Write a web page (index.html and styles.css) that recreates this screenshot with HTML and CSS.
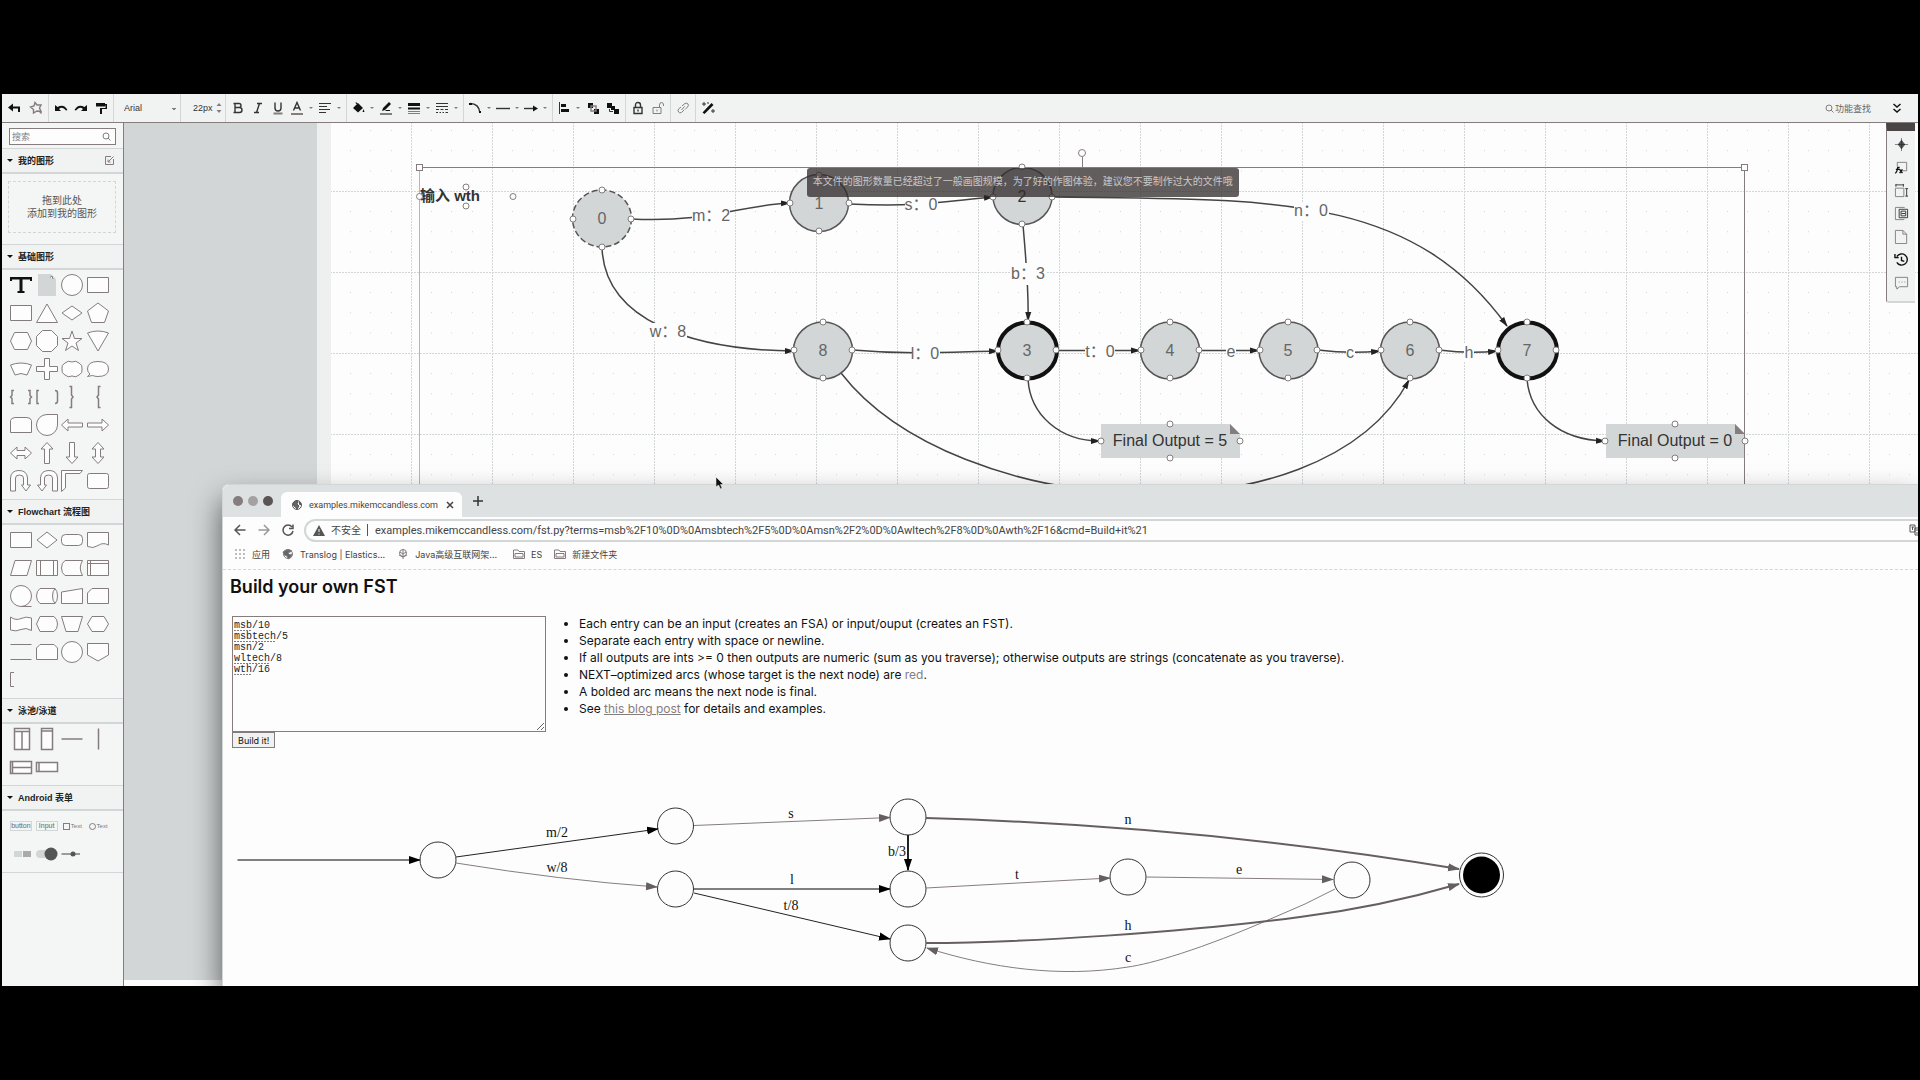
FILE: index.html
```html
<!DOCTYPE html>
<html lang="zh-CN">
<head>
<meta charset="utf-8">
<title>Build your own FST</title>
<link rel="stylesheet" href="styles.css">
</head>
<body>
<div class="app">
  <header class="toolbar">
    <div class="group group-nav">
      <button class="tool" aria-label="返回"><svg class="ic" viewBox="0 0 14 14"><path class="f" d="M1 6.500L6 2.500V5.500H13V11H11V7.500H6V10.500Z"/></svg></button>
      <button class="tool" aria-label="收藏"><svg class="ic" viewBox="0 0 14 14"><path class="g w" d="M6 1.500L8 4L12 4L10.500 7L12 10.500L8 10L4.500 12L4.500 8.500L1.500 6L5 5ZM10 10L12.500 12.500"/></svg></button>
    </div>
    <div class="group">
      <button class="tool" aria-label="撤销"><svg class="ic" viewBox="0 0 14 14"><path class="f" d="M1 4V10H7L5 8Q8.500 5 12 9.500L13.500 9Q10 2.500 3.500 6Z"/></svg></button>
      <button class="tool" aria-label="重做"><svg class="ic" viewBox="0 0 14 14"><path class="f" d="M13 4V10H7L9 8Q5.500 5 2 9.500L.5 9Q4 2.500 10.500 6Z"/></svg></button>
      <button class="tool" aria-label="格式刷"><svg class="ic" viewBox="0 0 14 14"><path class="f" d="M2 2H11V3H13V8H8V13H6V7H11.500V4.500H11V5.500H2Z"/></svg></button>
    </div>
    <div class="group">
      <select class="font-name" aria-label="字体"><option>Arial</option></select>
    </div>
    <div class="group">
      <input class="font-size" aria-label="字号" value="22px">
      <svg class="spin" viewBox="0 0 6 12"><path d="M0.500 4L3 1L5.500 4ZM0.500 8L3 11L5.500 8Z"/></svg>
    </div>
    <div class="group">
      <button class="tool" aria-label="粗体"><svg class="ic" viewBox="0 0 14 14"><path class="l w" d="M4 2.500H8Q10 2.500 10 4.500T8 6.500H4ZM4 6.500H8.500Q11 6.500 11 9T8.500 11.500H4ZM2.500 2.500H4M2.500 11.500H4"/></svg></button>
      <button class="tool" aria-label="斜体"><svg class="ic" viewBox="0 0 14 14"><path class="l w" d="M6 2.500H11M3 11.500H8M8.500 2.500L5.500 11.500"/></svg></button>
      <button class="tool" aria-label="下划线"><svg class="ic" viewBox="0 0 14 14"><path class="l w" d="M4 1.500V7Q4 10 7 10T10 7V1.500"/><path class="g2" d="M2.500 12.500H11.500"/></svg></button>
      <button class="tool-dd" aria-label="文字颜色"><svg class="ic" viewBox="0 0 14 14"><path class="l w" d="M3.500 9.500L7 1.500L10.500 9.500M5 7H9"/><path class="g2" d="M1 13H13"/></svg></button>
      <button class="tool-dd" aria-label="对齐"><svg class="ic" viewBox="0 0 14 14"><path class="l" d="M1 2.500H13M1 5.500H9M1 8.500H12M1 11.500H8"/></svg></button>
    </div>
    <div class="group">
      <button class="tool-dd" aria-label="填充"><svg class="ic" viewBox="0 0 14 14"><path class="f" d="M2 7L7 2L12 7L7 11.500ZM12.500 8L13.500 11H11.500ZM5 1L9 5L8 5.500L4.500 2Z"/></svg></button>
      <button class="tool-dd" aria-label="线条颜色"><svg class="ic" viewBox="0 0 14 14"><path class="f" d="M3 10L4 7L10 1L12 3L6 9ZM6 10H11V9H7Z"/><path class="g2" d="M1 13H13"/></svg></button>
      <button class="tool-dd" aria-label="线条宽度"><svg class="ic" viewBox="0 0 14 14"><path class="f" d="M1 2H13V5H1ZM1 6.500H13V8.500H1Z"/><path class="g" d="M1 10.500H13M1 12.500H13"/></svg></button>
      <button class="tool-dd" aria-label="线条样式"><svg class="ic" viewBox="0 0 14 14"><path class="l" d="M1 2.500H13M1 5.500H13M1 8.500H4M5.500 8.500H8.500M10 8.500H13M1 11.500H3M4.500 11.500H6M7.500 11.500H9M10.500 11.500H13"/></svg></button>
    </div>
    <div class="group">
      <button class="tool-dd" aria-label="连线类型"><svg class="ic" viewBox="0 0 14 14"><path class="l w" d="M2 2.500Q11 2.500 12 12"/><path class="f" d="M1 2H4V4H1ZM11 10H13V12H11Z"/></svg></button>
      <button class="tool-dd" aria-label="起点"><svg class="ic" viewBox="0 0 14 14"><path class="l w" d="M0 7.500H14"/></svg></button>
      <button class="tool-dd" aria-label="终点"><svg class="ic" viewBox="0 0 14 14"><path class="l w" d="M0 7.500H10"/><path class="f" d="M9 4.500L14 7.500L9 10.500Z"/></svg></button>
    </div>
    <div class="group">
      <button class="tool-dd" aria-label="排列"><svg class="ic" viewBox="0 0 14 14"><path class="l" d="M2.500 1V13"/><path class="f" d="M4 3H9V6H4ZM4 8H12V11H4Z"/></svg></button>
      <button class="tool" aria-label="置于顶层"><svg class="ic" viewBox="0 0 14 14"><path class="f" d="M2 2H7V7H2ZM8 8H13V13H8Z"/><path class="g w" d="M5 5H10V10H5Z"/></svg></button>
      <button class="tool" aria-label="置于底层"><svg class="ic" viewBox="0 0 14 14"><path class="f" d="M1 2H6V7H1ZM5 5H9V9H5ZM8 8H13V13H8Z"/><path class="l" d="M3.500 8V10.500H7"/></svg></button>
    </div>
    <div class="group">
      <button class="tool" aria-label="锁定"><svg class="ic" viewBox="0 0 14 14"><path class="l w" d="M3 6.500H11V12.500H3ZM4.500 6V4Q4.500 1.500 7 1.500T9.500 4V6M7 8.500V10.500"/></svg></button>
      <button class="tool" aria-label="解锁"><svg class="ic" viewBox="0 0 14 14"><path class="g" d="M2 6.500H10V12.500H2ZM8.500 6V4Q8.500 1.500 10.500 1.500T12.500 4V5M6 8.500V10.500"/></svg></button>
    </div>
    <div class="group">
      <button class="tool" aria-label="链接"><svg class="ic" viewBox="0 0 14 14"><path class="g" d="M6 5L9 2.500Q11 1.500 12 3T11.500 6L9 8.500M8 9L5.500 11.500Q3.500 12.500 2.500 11T2.500 8L5 6M5.500 9L8.500 5.500"/></svg></button>
    </div>
    <div class="group group-last">
      <button class="tool" aria-label="美化"><svg class="ic" viewBox="0 0 14 14"><path class="f" d="M1.500 11.500L10.500 2L12.500 4L3.500 13Z"/><path class="l" d="M3 1V5M1 3H5M12 8V12M10 10H14M7 1V3"/></svg></button>
    </div>
    <button class="find"><svg class="find-ic" viewBox="0 0 9 9"><circle cx="4" cy="4" r="3"/><path d="M6 6L8.500 8.500"/></svg>功能查找</button>
    <button class="tool tool-more" aria-label="收起"><svg class="ic" viewBox="0 0 14 14"><path class="l b" d="M3.500 3L7 6L10.500 3M3.500 8L7 11L10.500 8"/></svg></button>
  </header>

  <div class="body">
    <aside class="sidebar">
      <label class="search"><input type="text" placeholder="搜索" aria-label="搜索"><svg class="find-ic" viewBox="0 0 9 9"><circle cx="4" cy="4" r="3"/><path d="M6 6L8.500 8.500"/></svg></label>
      <h3 class="cat">我的图形<svg class="edit" viewBox="0 0 9 9"><path d="M6 .5H.5V8.500H8.500V3M3.500 5.500L8.500 .5M3 3.500V6H5.500"/></svg></h3>
      <div class="drop-wrap"><div class="drop">拖到此处<br>添加到我的图形</div></div>

      <h3 class="cat">基础图形</h3>
      <div class="shapes">
        <svg viewBox="0 0 24 24"><path class="ink" d="M1 4H23V8H21V6.500H13.500V18H15.500V20H8.500V18H10.500V6.500H3V8H1Z"/></svg>
        <svg viewBox="0 0 24 24"><path class="pale" d="M3 1H16L21 6V23H3Z"/><path d="M15 4.500L17 3L18 6"/></svg>
        <svg viewBox="0 0 24 24"><circle cx="12" cy="12" r="10.500"/></svg>
        <svg viewBox="0 0 24 24"><path d="M1.500 4.500H22.500V19.500H1.500Z"/></svg>
        <svg viewBox="0 0 24 24"><path d="M1.500 4.500H22.500V19.500H1.500Z"/></svg>
        <svg viewBox="0 0 24 24"><path d="M12 3L22.500 21.500H1.500Z"/></svg>
        <svg viewBox="0 0 24 24"><path d="M12 5L22 12L12 19L2 12Z"/></svg>
        <svg viewBox="0 0 24 24"><path d="M12 2L22.500 10L18.500 21.500H5.500L1.500 10Z"/></svg>
        <svg viewBox="0 0 24 24"><path d="M5.500 3.500H18.500L22.500 12L18.500 20.500H5.500L1.500 12Z"/></svg>
        <svg viewBox="0 0 24 24"><path d="M7.500 1.500H16.500L22.500 7.500V16.500L16.500 22.500H7.500L1.500 16.500V7.500Z"/></svg>
        <svg viewBox="0 0 24 24"><path d="M12 2L14.500 9.500H22L16 14L18.500 21.500L12 17L5.500 21.500L8 14L2 9.500H9.500Z"/></svg>
        <svg viewBox="0 0 24 24"><path d="M1.500 4Q12 0 22.500 4L12 22Z"/></svg>
        <svg viewBox="0 0 24 24"><path d="M1.500 8Q12 4 22.500 8L18 18Q12 15 6 18Z"/></svg>
        <svg viewBox="0 0 24 24"><path d="M9.500 1.500H14.500V9.500H22.500V14.500H14.500V22.500H9.500V14.500H1.500V9.500H9.500Z"/></svg>
        <svg viewBox="0 0 24 24"><path d="M5 6Q8 3 12 5Q16 3 19 6Q23 8 22 12Q23 16 19 18Q16 21 12 19Q8 21 5 18Q1 16 2 12Q1 8 5 6Z"/></svg>
        <svg viewBox="0 0 24 24"><path d="M1.500 19.500L4 17Q1.500 15 1.500 12Q1.500 4.500 12 4.500T22.500 12T12 19.500Q9 19.500 6.500 18.500Z"/></svg>
        <svg viewBox="0 0 24 24"><path class="w open" d="M5 5.500H3V10.500L1.500 12L3 13.500V18.500H5M19 5.500H21V10.500L22.500 12L21 13.500V18.500H19"/></svg>
        <svg viewBox="0 0 24 24"><path class="w open" d="M4 5.500H2V18.500H4M20 5.500Q22.500 5.500 22.500 8V16Q22.500 18.500 20 18.500"/></svg>
        <svg viewBox="0 0 24 24"><path class="w open" d="M9.500 1.500H11.500V10L13 12L11.500 14V22.500H9.500"/></svg>
        <svg viewBox="0 0 24 24"><path class="w open" d="M14.500 1.500H12.500V10L11 12L12.500 14V22.500H14.500"/></svg>
        <svg viewBox="0 0 24 24"><path d="M1.500 7.500Q2 5 6 4.500H18Q22 5 22.500 7.500V19.500H1.500Z"/></svg>
        <svg viewBox="0 0 24 24"><path d="M12 1.500H22.500V12A10.500 10.500 0 1 1 12 1.500Z"/></svg>
        <svg viewBox="0 0 24 24"><path d="M1.500 12L8 6V10H22.500V14H8V18Z"/></svg>
        <svg viewBox="0 0 24 24"><path d="M22.500 12L16 6V10H1.500V14H16V18Z"/></svg>
        <svg viewBox="0 0 24 24"><path d="M1.500 12L8 6V9.500H16V6L22.500 12L16 18V14.500H8V18Z"/></svg>
        <svg viewBox="0 0 24 24"><path d="M12 1.500L18 8H14.500V22.500H9.500V8H6Z"/></svg>
        <svg viewBox="0 0 24 24"><path d="M12 22.500L18 16H14.500V1.500H9.500V16H6Z"/></svg>
        <svg viewBox="0 0 24 24"><path d="M12 1.500L18 8H14.500V16H18L12 22.500L6 16H9.500V8H6Z"/></svg>
        <svg viewBox="0 0 24 24"><path d="M1.500 22V9Q2 1.500 10 1.500T18.500 9V16H21.500L17 22L12.500 16H14.500V9Q14.500 6 10.500 6T6.500 9V22Z"/></svg>
        <svg viewBox="0 0 24 24"><path d="M22.500 22V9Q22 1.500 14 1.500T5.500 9V16H2.500L7 22L11.500 16H9.500V9Q9.500 6 13.500 6T17.500 9V22Z"/></svg>
        <svg viewBox="0 0 24 24"><path d="M1.500 1.500H22.500L20 4.500H5.500V19L1.500 22.500Z"/></svg>
        <svg viewBox="0 0 24 24"><rect x="1.500" y="4.500" width="21" height="15" rx="2"/></svg>
      </div>

      <h3 class="cat">Flowchart 流程图</h3>
      <div class="shapes">
        <svg viewBox="0 0 24 24"><path d="M1.500 4.500H22.500V19.500H1.500Z"/></svg>
        <svg viewBox="0 0 24 24"><path d="M12 4L22 12L12 20L2 12Z"/></svg>
        <svg viewBox="0 0 24 24"><rect x="1.500" y="6.500" width="21" height="11" rx="4"/></svg>
        <svg viewBox="0 0 24 24"><path d="M1.500 4.500H22.500V17Q17 14 12 17.500T1.500 18.500Z"/></svg>
        <svg viewBox="0 0 24 24"><path d="M6 4.500H22.500L18 19.500H1.500Z"/></svg>
        <svg viewBox="0 0 24 24"><path d="M1.500 4.500H22.500V19.500H1.500ZM5.500 4.500V19.500M18.500 4.500V19.500"/></svg>
        <svg viewBox="0 0 24 24"><path d="M5 4.500H22.500Q18 12 22.500 19.500H5Q1.500 17 1.500 12T5 4.500Z"/></svg>
        <svg viewBox="0 0 24 24"><path d="M1.500 4.500H22.500V19.500H1.500ZM4.500 4.500V19.500M1.500 7.500H22.500"/></svg>
        <svg viewBox="0 0 24 24"><circle cx="12" cy="12" r="10.500"/><path d="M12 22.500H22.500"/></svg>
        <svg viewBox="0 0 24 24"><path d="M5 4.500H20Q22.500 7 22.500 12T20 19.500H5Q1.500 17 1.500 12T5 4.500ZM20 4.500Q17.500 7 17.500 12T20 19.500"/></svg>
        <svg viewBox="0 0 24 24"><path d="M1.500 8L22.500 4.500V19.500H1.500Z"/></svg>
        <svg viewBox="0 0 24 24"><path d="M6 4.500H22.500V19.500H1.500V9Z"/></svg>
        <svg viewBox="0 0 24 24"><path d="M1.500 5Q7 9 12 6.500T22.500 6V18.500Q17 15 12 17.500T1.500 18Z"/></svg>
        <svg viewBox="0 0 24 24"><path d="M5 4.500H19Q22.500 7 22.500 12T19 19.500H5L1.500 12Z"/></svg>
        <svg viewBox="0 0 24 24"><path d="M1.500 4.500H22.500L18 19.500H6Z"/></svg>
        <svg viewBox="0 0 24 24"><path d="M6 4.500H18L22.500 12L18 19.500H6L1.500 12Z"/></svg>
        <svg viewBox="0 0 24 24"><path d="M1.500 4.500H22.500M1.500 19.500H22.500"/></svg>
        <svg viewBox="0 0 24 24"><path d="M5 4.500H19L22.500 8V19.500H1.500V8Z"/></svg>
        <svg viewBox="0 0 24 24"><circle cx="12" cy="12" r="10.500"/></svg>
        <svg viewBox="0 0 24 24"><path d="M1.500 3.500H22.500V15L12 21L1.500 15Z"/></svg>
        <svg viewBox="0 0 24 24"><path class="open" d="M5 4.500H1.500V18.500H5"/></svg>
      </div>

      <h3 class="cat">泳池/泳道</h3>
      <div class="shapes">
        <svg viewBox="0 0 24 24"><path class="w" d="M5.500 1.500H20.500V22.500H5.500ZM5.500 4.500H20.500M13 4.500V22.500"/></svg>
        <svg viewBox="0 0 24 24"><path class="w" d="M6.500 1.500H17.500V22.500H6.500ZM6.500 4H17.500"/></svg>
        <svg viewBox="0 0 24 24"><path class="w" d="M1.500 12H22.500"/></svg>
        <svg viewBox="0 0 24 24"><path class="w" d="M12.500 1.500V22.500"/></svg>
        <svg viewBox="0 0 24 24"><path class="w" d="M1.500 6.500H22.500V18.500H1.500ZM3.500 6.500V18.500M3.500 12.500H22.500"/></svg>
        <svg viewBox="0 0 24 24"><path class="w" d="M1.500 7.500H22.500V16.500H1.500ZM4 7.500V16.500"/></svg>
      </div>

      <h3 class="cat">Android 表单</h3>
      <div class="shapes shapes-form">
        <span class="mini">button</span>
        <span class="mini">Input</span>
        <span class="opt"><i class="box"></i>Text</span>
        <span class="opt"><i class="box round"></i>Text</span>
        <svg viewBox="0 0 24 24"><path class="pale" d="M5 9H13V15H5Z"/><path class="mid" d="M14 9H22V15H14Z"/></svg>
        <svg viewBox="0 0 24 24"><rect class="pale" x="1" y="8" width="16" height="8" rx="4"/><circle class="dark" cx="16" cy="12" r="6.500"/></svg>
        <svg viewBox="0 0 24 24"><path class="w" d="M1.500 12H20"/><circle class="dark" cx="13" cy="12" r="2.500"/></svg>
      </div>
    </aside>

    <main class="stage">
      <div class="sheet">
        <svg class="diagram" width="100%" height="100%">
          <defs>
            <pattern id="grid" width="81" height="81" x="330" y="110" patternUnits="userSpaceOnUse">
              <path d="M0.500 0V81M0 0.500H81" stroke="#d2d6d7" stroke-dasharray="2 1"/>
              <path d="M20.500 20V81M40.500 20V81M61.500 20V81" stroke="#d2d6d7" stroke-dasharray="1 19.250"/>
            </pattern>
            <marker id="tip" viewBox="0 0 10 8" refX="9" refY="4" markerWidth="10" markerHeight="8" markerUnits="userSpaceOnUse" orient="auto"><path d="M0 1L10 4L0 7Z" fill="#222"/></marker>
          </defs>
          <g transform="translate(-331 -123)">
            <rect x="331" y="123" width="100%" height="100%" fill="url(#grid)"/>
            <g class="edge">
              <path d="M631 219C710 223 740 205 790 203"/>
              <path d="M602 247C604 320 690 350 794 351"/>
              <path d="M849 204C920 207 940 202 993 197"/>
              <path d="M1023 225C1026 260 1029 290 1028 321"/>
              <path d="M853 350C910 355 950 352 998 351"/>
              <path d="M1057 350.500H1140"/>
              <path d="M1200 350.500H1259"/>
              <path d="M1318 350Q1350 354 1380 351"/>
              <path d="M1439 350Q1470 354 1497 351"/>
              <path d="M841 373C955 520 1320 545 1409 380"/>
              <path d="M1053 197C1270 200 1410 192 1507 326"/>
              <path d="M1028 379C1030 415 1060 441 1100 441"/>
              <path d="M1527 379C1530 415 1560 440 1605 441"/>
            </g>
            <g class="plate">
              <rect x="692" y="207" width="38" height="17"/><rect x="905" y="196" width="33" height="17"/><rect x="1011" y="263" width="35" height="22"/>
              <rect x="650" y="323" width="37" height="17"/><rect x="912" y="344" width="28" height="17"/><rect x="1085" y="343" width="30" height="17"/>
              <rect x="1226" y="343" width="10" height="17"/><rect x="1346" y="344" width="9" height="17"/><rect x="1464" y="344" width="10" height="17"/><rect x="1294" y="203" width="35" height="17"/>
            </g>
            <g class="node">
              <ellipse class="start" cx="602" cy="218.500" rx="29.500" ry="28.500"/>
              <ellipse cx="819" cy="203" rx="29.500" ry="28.500"/>
              <ellipse cx="1022.500" cy="196" rx="29.500" ry="28.500"/>
              <ellipse cx="823" cy="350.500" rx="29.500" ry="28.500"/>
              <ellipse class="final" cx="1027.500" cy="350.500" rx="29.500" ry="28"/>
              <ellipse cx="1170" cy="350.500" rx="29.500" ry="28.500"/>
              <ellipse cx="1288.500" cy="350.500" rx="29.500" ry="28.500"/>
              <ellipse cx="1410" cy="350.500" rx="29.500" ry="28.500"/>
              <ellipse class="final" cx="1527.500" cy="350.500" rx="29.500" ry="28"/>
            </g>
            <path class="note" d="M1101 424H1230L1240 434V458H1101ZM1606 424H1735L1745 434V458H1606Z"/>
            <path class="fold" d="M1230 424V434H1240ZM1735 424V434H1745Z"/>
            <g class="num">
              <text x="602" y="224">0</text><text x="819" y="209">1</text><text class="dk" x="1022" y="202">2</text><text x="823" y="356">8</text><text x="1027" y="356">3</text><text x="1170" y="356">4</text><text x="1288" y="356">5</text><text x="1410" y="356">6</text><text x="1527" y="356">7</text>
            </g>
            <g class="lab">
              <text x="711" y="221">m：2</text><text x="921" y="210">s：0</text><text x="1028" y="279">b：3</text><text x="668" y="337">w：8</text><text x="925" y="359">l：0</text><text x="1100" y="357">t：0</text><text x="1231" y="357">e</text><text x="1350" y="358">c</text><text x="1469" y="358">h</text><text x="1311" y="216">n：0</text>
              <text class="dk" x="1170" y="446">Final Output = 5</text><text class="dk" x="1675" y="446">Final Output = 0</text>
            </g>
            <path class="sel" d="M419.500 167.500H1744.500M1744.500 168V990M1082.500 157V167"/>
            <path class="sel-pale" d="M419.500 168V990"/>
            <text class="input" x="420" y="201">输入 wth</text>
            <g class="grip">
              <rect x="416.500" y="164.500" width="6" height="6"/><rect x="1741.500" y="164.500" width="6" height="6"/><circle cx="1082" cy="153" r="3.500"/>
              <circle cx="419.500" cy="196.500" r="3"/><circle cx="466" cy="187" r="3"/><circle cx="466" cy="206" r="3"/><circle cx="513" cy="196.500" r="3"/>
              <circle cx="602" cy="190" r="3"/><circle cx="602" cy="247" r="3"/><circle cx="573" cy="219" r="3"/><circle cx="631" cy="219" r="3"/>
              <circle cx="819" cy="175" r="3"/><circle cx="819" cy="231" r="3"/><circle cx="790" cy="203" r="3"/><circle cx="849" cy="203" r="3"/>
              <circle cx="1022" cy="167" r="3"/><circle cx="1022" cy="224" r="3"/><circle cx="993" cy="197" r="3"/><circle cx="1052" cy="197" r="3"/>
              <circle cx="823" cy="322" r="3"/><circle cx="823" cy="378" r="3"/><circle cx="794" cy="350" r="3"/><circle cx="852" cy="350" r="3"/>
              <circle cx="1027" cy="322" r="3"/><circle cx="1027" cy="378" r="3"/><circle cx="998" cy="350" r="3"/><circle cx="1056" cy="350" r="3"/>
              <circle cx="1170" cy="322" r="3"/><circle cx="1170" cy="378" r="3"/><circle cx="1141" cy="350" r="3"/><circle cx="1199" cy="350" r="3"/>
              <circle cx="1288" cy="322" r="3"/><circle cx="1288" cy="378" r="3"/><circle cx="1260" cy="350" r="3"/><circle cx="1317" cy="350" r="3"/>
              <circle cx="1410" cy="322" r="3"/><circle cx="1410" cy="378" r="3"/><circle cx="1381" cy="350" r="3"/><circle cx="1439" cy="350" r="3"/>
              <circle cx="1527" cy="322" r="3"/><circle cx="1527" cy="378" r="3"/><circle cx="1498" cy="350" r="3"/><circle cx="1556" cy="350" r="3"/>
              <circle cx="1101" cy="441" r="3"/><circle cx="1240" cy="441" r="3"/><circle cx="1170" cy="424" r="3"/><circle cx="1170" cy="458" r="3"/>
              <circle cx="1605" cy="441" r="3"/><circle cx="1745" cy="441" r="3"/><circle cx="1675" cy="424" r="3"/><circle cx="1675" cy="458" r="3"/>
            </g>
          </g>
        </svg>
      </div>
    </main>
  </div>

  <div class="notice">本文件的图形数量已经超过了一般画图规模，为了好的作图体验，建议您不要制作过大的文件哦</div>

  <nav class="dock">
    <button class="dock-btn" aria-label="导航"><svg class="ic16" viewBox="0 0 16 16"><path d="M8 1V15M1 8H15"/><path class="f" d="M8 3L12 8L8 13L4 8Z" opacity=".7"/></svg></button>
    <button class="dock-btn" aria-label="公式"><svg class="ic16" viewBox="0 0 16 16"><path d="M3.500 7V2.500H13.500V11.500H9"/><path class="l b" d="M1 14Q3 14 4 8H6M2 10H6M6 10L9 14M9 10L6 14"/></svg></button>
    <button class="dock-btn" aria-label="度量"><svg class="ic16" viewBox="0 0 16 16"><path d="M1.500 5.500H10.500V14.500H1.500Z"/><path class="l" d="M2 2H10M2 1V4M10 1V4M13.500 6V14M12 6H15M12 14H15"/></svg></button>
    <button class="dock-btn" aria-label="图层"><svg class="ic16" viewBox="0 0 16 16"><path d="M11 2V1.500H1.500V14.500H11"/><path class="l" d="M5.500 3.500H14.500V12.500H5.500ZM7.500 5.500H12.500V10.500H7.500ZM8 8H12"/></svg></button>
    <button class="dock-btn" aria-label="页面"><svg class="ic16" viewBox="0 0 16 16"><path d="M1.500 1.500H9.500L13.500 5.500V15.500H1.500ZM9.500 1.500V5.500H13.500"/></svg></button>
    <button class="dock-btn" aria-label="历史"><svg class="ic16" viewBox="0 0 16 16"><path class="l b" d="M3 5A6 6 0 1 1 3 11M1 2V6H5M8 5V9L11 10"/></svg></button>
    <button class="dock-btn" aria-label="评论"><svg class="ic16" viewBox="0 0 16 16"><path d="M1.500 2.500H14.500V12.500H6L3 15V12.500H1.500ZM5 7.500H6M8 7.500H9M11 7.500H12"/></svg></button>
  </nav>

  <section class="browser">
    <div class="tabs">
      <span class="light"></span><span class="light light-b"></span><span class="light light-c"></span>
      <div class="tab">
        <svg class="globe" viewBox="0 0 12 12"><circle cx="6" cy="6" r="4.500"/><path class="f" d="M2 4Q5 1 7 2L6 5L8 7L6 10Q5 8 3 7ZM8 3L10 5L9 6Z"/></svg>
        <span class="tab-title">examples.mikemccandless.com</span>
        <button class="close" aria-label="关闭"><svg viewBox="0 0 8 8"><path d="M1 1L7 7M7 1L1 7"/></svg></button>
      </div>
      <button class="plus" aria-label="新标签页"><svg viewBox="0 0 10 10"><path d="M5 0V10M0 5H10"/></svg></button>
    </div>
    <div class="nav">
      <button class="nav-btn" aria-label="后退"><svg viewBox="0 0 12 12"><path d="M11.500 6H1M6 1L1 6L6 11"/></svg></button>
      <button class="nav-btn dim" aria-label="前进"><svg viewBox="0 0 12 12"><path d="M.5 6H11M6 1L11 6L6 11"/></svg></button>
      <button class="nav-btn" aria-label="刷新"><svg viewBox="0 0 12 12"><path d="M10 3A5 5 0 1 0 11 7M11 .5V4.500H7"/></svg></button>
      <div class="omni">
        <svg class="warn" viewBox="0 0 12 11"><path d="M6 0L12 11H0Z"/><path class="bang" d="M6 4V7M6 8.500V9.500"/></svg>
        <span class="unsafe">不安全</span>
        <input class="url" aria-label="地址" value="examples.mikemccandless.com/fst.py?terms=msb%2F10%0D%0Amsbtech%2F5%0D%0Amsn%2F2%0D%0Awltech%2F8%0D%0Awth%2F16&amp;cmd=Build+it%21">
        <svg class="trans" viewBox="0 0 9 12"><path d="M1 1H6V8H1ZM6 4H12V11H6ZM2.500 3H5M3.500 3V6M7 6H9M7 9H9"/></svg>
      </div>
    </div>
    <div class="marks">
      <a href="#"><svg viewBox="0 0 12 12"><path d="M1 2H3M5 2H7M9 2H11M1 6H3M5 6H7M9 6H11M1 10H3M5 10H7M9 10H11"/></svg>应用</a>
      <a href="#"><svg viewBox="0 0 12 12"><circle cx="6" cy="6" r="4.500"/><path class="f" d="M1 4Q5 0 10 3L6 5L8 7L10 6Q10 10 6 11L5 8L2 7Z"/></svg>Translog | Elastics...</a>
      <a href="#"><svg viewBox="0 0 12 12"><path d="M6 1V11M3 4L6 6L9 4M2 7L6 9L10 7"/><circle cx="6" cy="5" r="3.500"/></svg>Java高级互联网架...</a>
      <a href="#" class="folder"><svg viewBox="0 0 12 12"><path d="M.5 2H5L6 3.500H11.500V10.500H.5ZM2 5.500H10V9H2Z"/></svg>ES</a>
      <a href="#"><svg viewBox="0 0 12 12"><path d="M.5 2H5L6 3.500H11.500V10.500H.5ZM2 5.500H10V9H2Z"/></svg>新建文件夹</a>
    </div>
    <div class="page">
      <h2>Build your own FST</h2>
      <div class="cols">
        <form class="form">
          <textarea class="terms" aria-label="terms" spellcheck="false">msb/10
msbtech/5
msn/2
wltech/8
wth/16</textarea>
          <button type="button" class="build">Build it!</button>
        </form>
        <ul class="tips">
          <li>Each entry can be an input (creates an FSA) or input/ouput (creates an FST).</li>
          <li>Separate each entry with space or newline.</li>
          <li>If all outputs are ints &gt;= 0 then outputs are numeric (sum as you traverse); otherwise outputs are strings (concatenate as you traverse).</li>
          <li>NEXT–optimized arcs (whose target is the next node) are <span class="red">red</span>.</li>
          <li>A bolded arc means the next node is final.</li>
          <li>See <a href="#">this blog post</a> for details and examples.</li>
        </ul>
      </div>
      <svg class="fst" width="1300" height="196">
        <defs>
          <marker id="ab" viewBox="0 0 12 10" refX="11" refY="5" markerWidth="12" markerHeight="10" markerUnits="userSpaceOnUse" orient="auto"><path d="M0 1L12 5L0 9Z" fill="#000"/></marker>
          <marker id="ag" viewBox="0 0 12 10" refX="11" refY="5" markerWidth="12" markerHeight="10" markerUnits="userSpaceOnUse" orient="auto"><path d="M0 1L12 5L0 9Z" fill="#665f5f"/></marker>
        </defs>
        <g transform="translate(-223 -790)">
          <g class="ring">
            <circle cx="438" cy="860" r="18"/><circle cx="675.500" cy="826" r="18"/><circle cx="675.500" cy="889" r="18"/><circle cx="908" cy="817" r="18"/><circle cx="908" cy="889" r="18"/><circle cx="908" cy="943" r="18"/><circle cx="1128" cy="877" r="18"/><circle cx="1352" cy="880" r="18"/><circle cx="1481.500" cy="875" r="22"/><circle class="solid" cx="1481.500" cy="875" r="18.500"/>
          </g>
          <g class="arc">
            <path class="g1" d="M237.500 860H420"/>
            <path d="M456 857L658 829"/>
            <path class="r" d="M456 863Q560 880 657 887"/>
            <path class="r" d="M694 825.500L890 817.500"/>
            <path class="g1" d="M694 889H890"/>
            <path d="M694 893L890 939"/>
            <path class="k" d="M908 835V870"/>
            <path class="r" d="M926 888L1110 878"/>
            <path class="r" d="M1146 877L1333 879.500"/>
            <path class="r" d="M1335 889Q1305 905 1275 917C1200 950 1150 964 1128 967C1060 978 990 968 927 948"/>
            <path class="r t" d="M926 818C1060 822 1250 834 1459 869"/>
            <path class="r t" d="M926 943C1020 943 1190 932 1300 917Q1380 907 1459 884"/>
          </g>
          <g class="t-lab">
            <text x="557" y="837">m/2</text><text x="557" y="872">w/8</text><text x="791" y="818">s</text><text x="792" y="884">l</text><text x="791" y="910">t/8</text><text x="897" y="856">b/3</text><text x="1128" y="824">n</text><text x="1017" y="879">t</text><text x="1239" y="874">e</text><text x="1128" y="930">h</text><text x="1128" y="962">c</text>
          </g>
        </g>
      </svg>
    </div>
  </section>

  <svg class="cursor" viewBox="0 0 8 12"><path d="M0 0V10L2.500 8L4.500 12L6 11L4.500 7.500H7.500Z"/></svg>
</div>
</body>
</html>
```
FILE: styles.css
```css
* { box-sizing: border-box; }
:root {
  --ink: #111;
  --mid: #857d7d;
  --pale: #d2d6d7;
  --panel: #f1f3f3;
  --white: #fdfdfd;
  --cjk: "Liberation Sans", "Noto Sans CJK SC", sans-serif;
}
body { margin: 0; background: #000; font-family: var(--cjk); font-size: 9px; color: #333; }
button, input, select, textarea { font: inherit; color: inherit; }
button { border: 0; background: none; padding: 0; }
.app {
  position: relative;
  display: flex;
  flex-direction: column;
  height: calc(100vh - 188px);
  margin: 94px 2px;
  overflow: hidden;
  background: var(--white);
}

/* toolbar */
.toolbar { display: flex; align-items: stretch; height: 29px; flex: none; background: var(--panel); border-bottom: 1px solid var(--mid); }
.group { display: flex; align-items: center; padding: 0 2px; border-right: 1px solid var(--pale); }
.group-nav { gap: 2px; }
.group-last { border: 0; }
.tool { display: flex; justify-content: center; align-items: center; width: 20px; height: 28px; }
.tool-dd { display: flex; align-items: center; width: 28px; height: 28px; padding-left: 2px; }
.tool-dd::after { content: ""; margin-left: 5px; border: 2px solid transparent; border-top-color: var(--mid); border-bottom: 0; }
.ic { width: 14px; height: 14px; fill: none; }
.ic .f, .ic16 .f { fill: var(--ink); stroke: none; }
.ic .l, .ic16 .l { stroke: #333; fill: none; }
.ic .g { stroke: var(--mid); }
.ic .g2 { stroke: var(--mid); stroke-width: 2; }
.ic .w { stroke-width: 1.400; }
.ic .b, .ic16 .b { stroke-width: 1.500; stroke: var(--ink); }
.font-name {
  width: 62px; height: 18px; padding: 0 8px; border: 0; appearance: none;
  background: linear-gradient(var(--mid), var(--mid)) 56px 9px / 4px 1px no-repeat,
    linear-gradient(var(--mid), var(--mid)) 57px 10px / 2px 1px no-repeat;
}
.font-size { width: 32px; height: 18px; padding: 0 0 0 10px; border: 0; background: none; }
.spin { width: 6px; height: 12px; margin: 0 1px; fill: var(--mid); }
.find { display: flex; align-items: center; gap: 1px; margin-left: auto; color: #666; }
.find-ic { width: 9px; height: 9px; fill: none; stroke: var(--mid); }
.tool-more { margin: 0 11px 0 16px; }

/* body */
.body { display: flex; flex: 1; min-height: 0; }
.sidebar { width: 122px; flex: none; background: #f4f5f5; border-right: 1px solid var(--mid); overflow: hidden; }
.search { display: flex; align-items: center; height: 17px; margin: 5px 7px 3px 7px; border: 1px solid var(--mid); background: var(--white); padding-right: 4px; }
.search input { flex: 1; min-width: 0; border: 0; padding: 0 2px; background: none; outline: 0; }
.search input::placeholder { color: var(--mid); }
.cat {
  display: flex; align-items: center; height: 26px; margin: 0; padding: 0 9px 0 5px;
  border-top: 1px solid var(--pale); border-bottom: 2px solid var(--pale);
  background: var(--panel); font-size: 9px; color: #222;
}
.cat::before { content: ""; margin-right: 5px; border: 3px solid transparent; border-top-color: var(--ink); border-bottom: 0; }
.edit { width: 9px; height: 9px; margin-left: auto; fill: none; stroke: var(--mid); }
.drop-wrap { height: 70px; padding: 7px 7px 11px 6px; }
.drop { height: 100%; padding-top: 12px; border: 1px dashed var(--pale); text-align: center; font-size: 10px; line-height: 13px; color: #555; }
.shapes { display: grid; grid-template-columns: repeat(4, 1fr); grid-auto-rows: 28px; place-items: center; padding: 1px 12px 4px 6px; }
.shapes svg { width: 24px; height: 24px; fill: var(--white); stroke: var(--mid); }
.shapes .ink { fill: var(--ink); stroke: none; }
.shapes .pale { fill: var(--pale); stroke: none; }
.shapes .mid { fill: #aaa; stroke: none; }
.shapes .dark { fill: #555; stroke: none; }
.shapes .w { stroke-width: 1.500; }
.shapes .open { fill: none; }
.shapes-form { border-bottom: 1px solid var(--pale); }
.mini { width: 22px; height: 10px; border: 1px solid var(--pale); text-align: center; font-size: 7px; line-height: 8px; color: #666; }
.opt { display: flex; align-items: center; gap: 1px; font-size: 6px; color: #777; }
.box { width: 7px; height: 7px; border: 1px solid var(--mid); }
.round { border-radius: 50%; }
.stage { flex: 1; min-width: 0; padding: 0 0 6px 193px; background: linear-gradient(var(--pale), var(--pale)) top / 100% calc(100% - 6px) no-repeat; }
.sheet { height: 100%; border-left: 14px solid #eef0f0; background: var(--white); }
.diagram { display: block; }

/* diagram */
.edge path { fill: none; stroke: #444; stroke-width: 1.500; marker-end: url(#tip); }
.plate rect { fill: var(--white); }
.node ellipse { fill: var(--pale); stroke: #555; stroke-width: 1.500; }
.node .start { stroke-dasharray: 6 3; }
.node .final { stroke: var(--ink); stroke-width: 4; }
.note { fill: var(--pale); }
.fold { fill: var(--mid); }
.num text, .lab text { font-family: var(--cjk); font-size: 16px; fill: #666; text-anchor: middle; }
.num .dk, .lab .dk { fill: #333; }
.input { font-family: var(--cjk); font-size: 15px; font-weight: bold; fill: #333; }
.sel { stroke: var(--mid); fill: none; }
.sel-pale { stroke: #b5b5b5; }
.grip * { fill: var(--white); stroke: var(--mid); }

/* floating parts over the canvas */
.notice {
  position: absolute; top: 74px; left: 42%; width: 432px; height: 29px;
  border-radius: 3px; background: rgba(50, 44, 44, .76); color: #c8c8c8;
  font-size: 10px; line-height: 28px; text-align: center; white-space: nowrap;
}
.dock {
  position: absolute; top: 29px; right: 3px; width: 29px; display: flex; flex-direction: column;
  padding-bottom: 9px; background: var(--panel); border: 1px solid var(--mid); border-top: 8px solid #4a4545;
  border-right: 0; border-bottom: 2px solid var(--pale); border-radius: 0 0 0 3px;
}
.dock-btn { display: grid; place-items: center; height: 23px; padding-top: 4px; }
.ic16 { width: 15px; height: 15px; fill: none; stroke: var(--mid); }
.cursor { position: absolute; left: 714px; top: 383px; width: 8px; height: 12px; fill: #111; stroke: #fff; stroke-width: .5; }

/* browser window */
.browser {
  position: absolute; left: 220px; top: 390px; right: 0; bottom: 0;
  border: 1px solid var(--pale); border-width: 1px 0 0 1px; border-radius: 6px 0 0 0;
  background: var(--white); box-shadow: 0 16px 30px rgba(0, 0, 0, .6);
  font-family: Inter, "Noto Sans CJK SC", sans-serif;
}
.tabs { display: flex; align-items: center; height: 32px; padding-left: 10px; background: #dee1e2; border-radius: 6px 0 0 0; }
.light { width: 10px; height: 10px; margin-right: 5px; border-radius: 50%; background: #857d7d; }
.light-b { background: #a5a1a1; }
.light-c { background: #5a5454; }
.tab { display: flex; align-items: center; align-self: flex-end; width: 181px; height: 25px; margin-left: 3px; padding: 0 8px 0 10px; background: var(--white); border-radius: 6px 6px 0 0; font-family: Roboto, sans-serif; font-size: 9px; color: #444; }
.globe { width: 12px; height: 12px; margin-right: 6px; fill: none; stroke: #555; }
.globe .f, .marks .f { fill: #666; }
.tab-title { flex: 1; white-space: nowrap; }
.close { display: grid; }
.close svg { width: 8px; height: 8px; stroke: #444; stroke-width: 1.500; }
.plus { display: grid; margin-left: 11px; }
.plus svg { width: 10px; height: 10px; stroke: #333; stroke-width: 1.500; }
.nav { display: flex; align-items: center; height: 26px; padding-left: 5px; }
.nav-btn { display: grid; place-items: center; width: 24px; height: 24px; }
.nav-btn svg { width: 12px; height: 12px; fill: none; stroke: #555; stroke-width: 1.500; }
.nav .dim svg { stroke: #999; }
.omni { display: flex; flex: 1; align-items: center; height: 23px; margin-left: 4px; padding-left: 7px; border: 2px solid var(--pale); border-right: 0; border-radius: 12px 0 0 12px; font-size: 10px; color: #444; }
.warn { width: 12px; height: 11px; margin-right: 6px; fill: #555; }
.bang { stroke: #fff; }
.unsafe { padding-right: 6px; border-right: 1px solid #555; line-height: 12px; }
.url { flex: 1; padding: 0 0 0 7px; border: 0; background: none; font-family: Roboto, sans-serif; font-size: 11px; outline: 0; }
.trans { width: 9px; height: 12px; fill: none; stroke: #555; }
.marks { display: flex; align-items: center; height: 27px; padding: 0 0 4px 11px; border-bottom: 1px dashed var(--pale); font-size: 9px; }
.marks a { display: flex; align-items: center; gap: 6px; margin-right: 12px; color: #444; text-decoration: none; white-space: nowrap; }
.marks svg { width: 12px; height: 12px; fill: none; stroke: var(--mid); }
.marks .folder { margin-left: 4px; }

/* page in the window */
.page { padding-left: 7px; color: #111; }
.page h2 { margin: 0; padding-top: 4px; font-size: 18px; line-height: 26px; font-weight: 600; }
.cols { display: flex; margin-top: 16px; padding-left: 2px; }
.form { display: flex; flex-direction: column; align-items: flex-start; }
.terms {
  display: block; width: 314px; height: 116px; padding: 3px 1px; border: 1px solid var(--mid); color: #222;
  font: 10px/11px "Liberation Mono", monospace;
  --dots: repeating-linear-gradient(90deg, #857d7d 0 2px, transparent 2px 3px);
  background: var(--dots) 1px 13px / 18px 1px no-repeat, var(--dots) 1px 24px / 42px 1px no-repeat,
    var(--dots) 1px 46px / 36px 1px no-repeat, var(--dots) 1px 57px / 18px 1px no-repeat, var(--white);
}
.build { height: 16px; padding: 0 5px; border: 1px solid var(--mid); background: #f0f1f1; font-size: 9px; }
.tips { margin: -1px 0 0; padding-left: 33px; font-size: 12px; line-height: 17px; }
.tips a { color: var(--mid); }
.red { color: var(--mid); }
.fst { display: block; margin: 42px 0 0 -7px; }
.ring circle { fill: none; stroke: #333; }
.ring .solid { fill: #000; stroke: none; }
.arc path { fill: none; stroke: #222; marker-end: url(#ab); }
.arc .g1 { stroke: #555; stroke-width: 1.500; }
.arc .k { stroke-width: 2; }
.arc .r { stroke: var(--mid); marker-end: url(#ag); }
.arc .t { stroke: #665f5f; stroke-width: 2; }
.t-lab text { font-family: "Liberation Serif", serif; font-size: 14px; fill: #111; text-anchor: middle; }
```
